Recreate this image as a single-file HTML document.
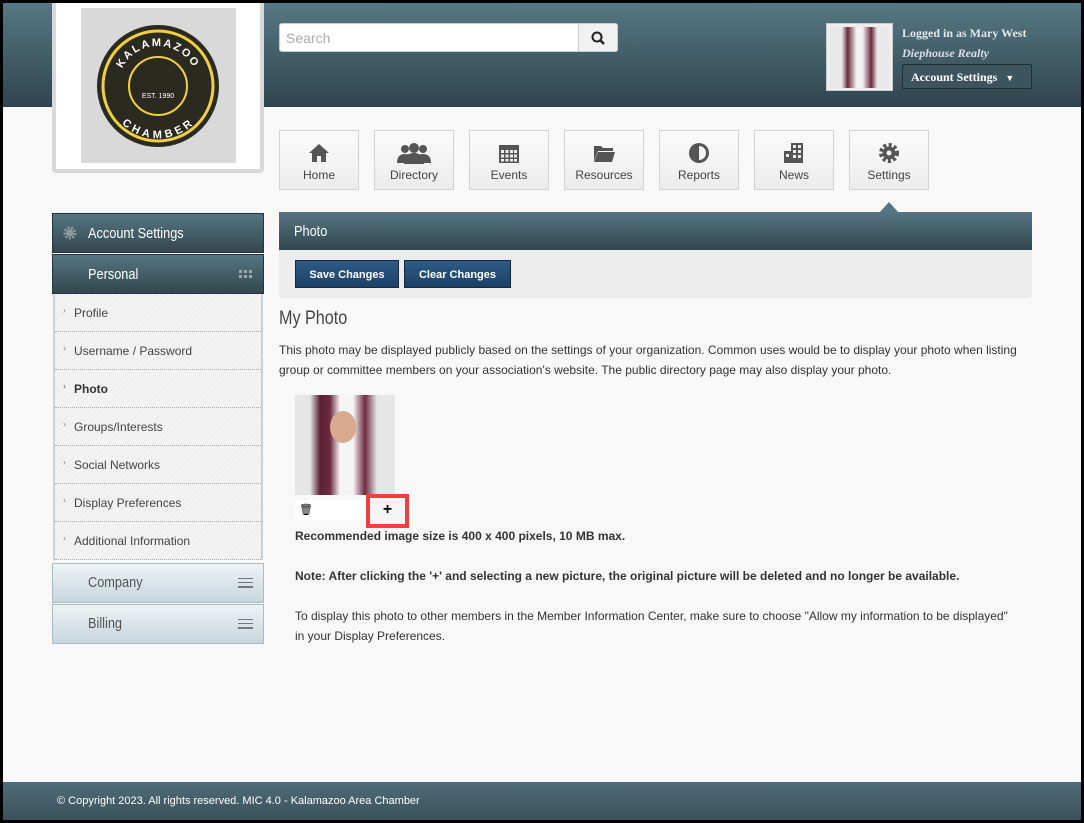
<!DOCTYPE html>
<html><head><style>
*{box-sizing:border-box;margin:0;padding:0}
body{width:1084px;height:823px;background:#000;font-family:"Liberation Sans",Arial,sans-serif;position:relative;overflow:hidden}
#pg{position:absolute;left:3px;top:3px;width:1078px;height:817px;background:#f8f8f8;overflow:hidden}
.a{position:absolute}
#hdr{left:0;top:0;width:1078px;height:104px;background:linear-gradient(#567884,#2f444e)}
#foot{left:0;top:779px;width:1078px;height:38px;background:linear-gradient(#4f6c78,#3a515b);color:#fff;font-size:11px;padding:13px 0 0 54px}
.nav{top:127px;width:80px;height:60px;border:1px solid #d2d2d2;background:linear-gradient(#fbfbfb,#ececec);text-align:center;font-size:12px;color:#444}
.nav svg{display:block;margin:11px auto 4px}
.bar{background:linear-gradient(#557582,#33474f);color:#fff}
.cn{display:inline-block;transform:scaleX(.85);transform-origin:left}
.side a{display:block;height:38px;border-bottom:1px dotted #aaa;font-size:12px;color:#444;padding:12px 0 0 19px;position:relative}
.side a:before{content:"›";position:absolute;left:8px;top:11px;font-size:9px;color:#888}
.lb{background:linear-gradient(#eef3f5,#c8d6dc);border:1px solid #a9bcc4;color:#555;font-size:15px;padding:10px 0 0 35px}
.ham{position:absolute;right:10px;top:14px;width:15px;height:10px;border-top:1px solid #777;border-bottom:1px solid #777}
.ham:after{content:"";position:absolute;left:0;right:0;top:3px;height:3px;border-top:1px solid #777;border-bottom:1px solid #777}
.btn{top:257px;height:28px;background:linear-gradient(#2e5b86,#1d4067);border:1px solid #0f2a45;color:#fff;font-size:11px;font-weight:bold;text-align:center;padding-top:8px}
p{font-size:12px;color:#333;line-height:20px}
</style></head><body><div id="pg">
<div id="hdr" class="a"></div>
<div class="a" style="left:49px;top:0;width:212px;height:170px;background:#fff;border:4px solid #d8d8d8;border-top:0;border-radius:0 0 4px 4px"></div>
<div class="a" style="left:78px;top:5px;width:155px;height:155px;background:#d9d9d9">
<svg width="155" height="155" viewBox="0 0 155 155"><defs><path id="t1" d="M37 78a40 40 0 0 1 80 0"/><path id="t2" d="M32 78a45 45 0 0 0 90 0"/></defs><circle cx="77" cy="78" r="61" fill="#2a2a20"/><circle cx="77" cy="78" r="55" fill="none" stroke="#f2cf3e" stroke-width="3"/><circle cx="77" cy="78" r="29" fill="none" stroke="#f2cf3e" stroke-width="2"/>
<text fill="#fff" font-size="11" font-weight="bold" font-family="Liberation Sans" letter-spacing="2"><textPath href="#t1" startOffset="50%" text-anchor="middle">KALAMAZOO</textPath></text>
<text x="77" y="90" fill="#fff" font-size="7" text-anchor="middle" font-family="Liberation Sans">EST. 1990</text>
<text fill="#fff" font-size="11" font-weight="bold" font-family="Liberation Sans" letter-spacing="2"><textPath href="#t2" startOffset="50%" text-anchor="middle" dominant-baseline="hanging">CHAMBER</textPath></text></svg></div>
<div class="a" style="left:276px;top:20px;width:339px;height:29px;background:#fff;border:1px solid #ccc;border-radius:3px;font-size:14px;color:#aaa;padding:6px 6px"><span>Search</span></div>
<div class="a" style="left:575px;top:20px;width:40px;height:29px;background:#f1f1f1;border:1px solid #ccc;border-radius:0 3px 3px 0"><svg width="40" height="28"><circle cx="18" cy="13" r="4.5" fill="none" stroke="#222" stroke-width="2"/><path d="M21 16l4 4" stroke="#222" stroke-width="2.5"/></svg></div>
<div class="a" style="left:823px;top:20px;width:67px;height:68px;background:#eee;border:1px solid #ccc;padding:3px"><div style="width:59px;height:61px;background:linear-gradient(90deg,#e8e8e8 20%,#6b2a3c 30%,#f4f4f4 45%,#f4f4f4 55%,#6b2a3c 70%,#e8e8e8 80%)"></div></div>
<div class="a" style="left:899px;top:23px;color:#e2e8ea;font-size:12px;font-weight:bold;font-family:'Liberation Serif',serif">Logged in as Mary West</div>
<div class="a" style="left:899px;top:43px;color:#dde;font-size:12px;font-weight:bold;font-style:italic;font-family:'Liberation Serif',serif">Diephouse Realty</div>
<div class="a" style="left:899px;top:61px;width:130px;height:25px;border:1px solid #1f2d33;background:#3c545e;border-radius:2px;color:#fff;font-size:12px;font-weight:bold;padding:5px 0 0 8px;font-family:'Liberation Serif',serif">Account Settings <span style="font-size:9px;margin-left:5px">▼</span></div>

<div class="a nav" style="left:276px"><svg width="22" height="22" viewBox="0 0 22 22"><path d="M11 2L1 11h3v9h5v-6h4v6h5v-9h3z" fill="#555"/></svg>Home</div>
<div class="a nav" style="left:371px"><svg width="36" height="22" viewBox="0 0 36 22"><circle cx="9" cy="7" r="4" fill="#555"/><circle cx="27" cy="7" r="4" fill="#555"/><path d="M1 21q0-9 8-9t8 9z M19 21q0-9 8-9t8 9z" fill="#555"/><circle cx="18" cy="6" r="5" fill="#555"/><path d="M8 22q0-11 10-11t10 11z" fill="#555"/></svg>Directory</div>
<div class="a nav" style="left:466px"><svg width="22" height="22" viewBox="0 0 22 22"><rect x="1" y="3" width="20" height="18" fill="#555"/><g fill="#eee"><rect x="3" y="8" width="3" height="3"/><rect x="7.5" y="8" width="3" height="3"/><rect x="12" y="8" width="3" height="3"/><rect x="16" y="8" width="3" height="3"/><rect x="3" y="12.5" width="3" height="3"/><rect x="7.5" y="12.5" width="3" height="3"/><rect x="12" y="12.5" width="3" height="3"/><rect x="16" y="12.5" width="3" height="3"/><rect x="3" y="17" width="3" height="2.5"/><rect x="7.5" y="17" width="3" height="2.5"/><rect x="12" y="17" width="3" height="2.5"/><rect x="16" y="17" width="3" height="2.5"/></g></svg>Events</div>
<div class="a nav" style="left:561px"><svg width="24" height="22" viewBox="0 0 24 22"><path d="M2 4h7l2 2h10v3H6L2 19z" fill="#555"/><path d="M6 10h17l-3 10H2z" fill="#555"/></svg>Resources</div>
<div class="a nav" style="left:656px"><svg width="24" height="22" viewBox="0 0 24 22"><circle cx="12" cy="11" r="10" fill="#555"/><path d="M12 4a7 7 0 0 1 0 14z" fill="#f3f3f3"/></svg>Reports</div>
<div class="a nav" style="left:751px"><svg width="24" height="22" viewBox="0 0 24 22"><rect x="9" y="1" width="12" height="20" fill="#555"/><rect x="2" y="9" width="7" height="12" fill="#555"/><g fill="#eee"><rect x="11" y="3" width="3" height="3"/><rect x="16" y="3" width="3" height="3"/><rect x="11" y="8" width="3" height="3"/><rect x="16" y="8" width="3" height="3"/><rect x="11" y="13" width="3" height="3"/><rect x="16" y="13" width="3" height="3"/><rect x="4" y="12" width="3" height="3"/></g></svg>News</div>
<div class="a nav" style="left:846px"><svg width="24" height="22" viewBox="0 0 24 22"><circle cx="12" cy="11" r="8" fill="none" stroke="#555" stroke-width="4" stroke-dasharray="3 2.3"/><circle cx="12" cy="11" r="6.5" fill="#555"/><circle cx="12" cy="11" r="2.5" fill="#f3f3f3"/></svg>Settings</div>
<div class="a" style="left:876px;top:199px;width:0;height:0;border-left:10px solid transparent;border-right:10px solid transparent;border-bottom:11px solid #557582"></div>

<div class="a bar" style="left:276px;top:209px;width:753px;height:38px;font-size:15px;padding:11px 0 0 15px"><span class="cn">Photo</span></div>
<div class="a" style="left:276px;top:247px;width:753px;height:48px;background:#ececec;border-radius:0 0 4px 4px"></div>
<div class="a btn" style="left:292px;width:104px">Save Changes</div>
<div class="a btn" style="left:401px;width:107px">Clear Changes</div>

<div class="a bar" style="left:49px;top:210px;width:212px;height:40px;font-size:15px;padding:11px 0 0 35px;border:1px solid #26353c">
<svg class="a" style="left:10px;top:12px" width="14" height="14"><circle cx="7" cy="7" r="5" fill="none" stroke="#8a9a9f" stroke-width="3" stroke-dasharray="2 1.5"/><circle cx="7" cy="7" r="3.5" fill="#8a9a9f"/></svg><span class="cn">Account Settings</span></div>
<div class="a bar" style="left:49px;top:251px;width:212px;height:40px;font-size:15px;padding:11px 0 0 35px;border:1px solid #26353c"><span class="cn">Personal</span>
<svg class="a" style="right:11px;top:15px" width="13" height="8"><g fill="#9aa8ad"><rect x="0" y="0" width="3" height="3"/><rect x="5" y="0" width="3" height="3"/><rect x="10" y="0" width="3" height="3"/><rect x="0" y="5" width="3" height="3"/><rect x="5" y="5" width="3" height="3"/><rect x="10" y="5" width="3" height="3"/></g></svg></div>
<div class="a side" style="left:50px;top:291px;width:210px;height:266px;background:repeating-linear-gradient(135deg,#f3f3f3 0 3px,#ececec 3px 4px);border-left:2px solid #c5d3d8;border-right:2px solid #c5d3d8">
<a>Profile</a><a>Username / Password</a><a style="font-weight:bold;color:#333">Photo</a><a>Groups/Interests</a><a>Social Networks</a><a>Display Preferences</a><a>Additional Information</a></div>
<div class="a lb" style="left:49px;top:560px;width:212px;height:40px"><span class="cn">Company</span><span class="ham"></span></div>
<div class="a lb" style="left:49px;top:601px;width:212px;height:40px"><span class="cn">Billing</span><span class="ham"></span></div>

<div class="a" style="left:276px;top:305px;font-size:19px;color:#444"><span class="cn">My Photo</span></div>
<p class="a" style="left:276px;top:337px;width:760px">This photo may be displayed publicly based on the settings of your organization. Common uses would be to display your photo when listing group or committee members on your association's website. The public directory page may also display your photo.</p>
<div class="a" style="left:292px;top:392px;width:100px;height:100px;background:linear-gradient(90deg,#e6e6e6 15%,#5a2035 25%,#6e2a40 35%,#f5f5f5 45%,#f5f5f5 58%,#6e2a40 70%,#e6e6e6 82%)"><div style="position:absolute;left:35px;top:16px;width:26px;height:32px;border-radius:50%;background:#d9a98e"></div></div>
<div class="a" style="left:292px;top:497px;width:100px;height:20px;background:#fff;font-size:11px;padding:3px 4px">🗑</div>
<div class="a" style="left:363px;top:491px;width:43px;height:34px;border:4px solid #f04040;background:#f5f5f5;font-size:16px;font-weight:bold;text-align:center;line-height:24px">+</div>
<p class="a" style="left:292px;top:523px;font-weight:bold">Recommended image size is 400 x 400 pixels, 10 MB max.</p>
<p class="a" style="left:292px;top:563px;font-weight:bold">Note: After clicking the '+' and selecting a new picture, the original picture will be deleted and no longer be available.</p>
<p class="a" style="left:292px;top:603px;width:720px">To display this photo to other members in the Member Information Center, make sure to choose "Allow my information to be displayed" in your Display Preferences.</p>
<div id="foot" class="a">© Copyright 2023. All rights reserved. MIC 4.0 - Kalamazoo Area Chamber</div>
</div></body></html>
